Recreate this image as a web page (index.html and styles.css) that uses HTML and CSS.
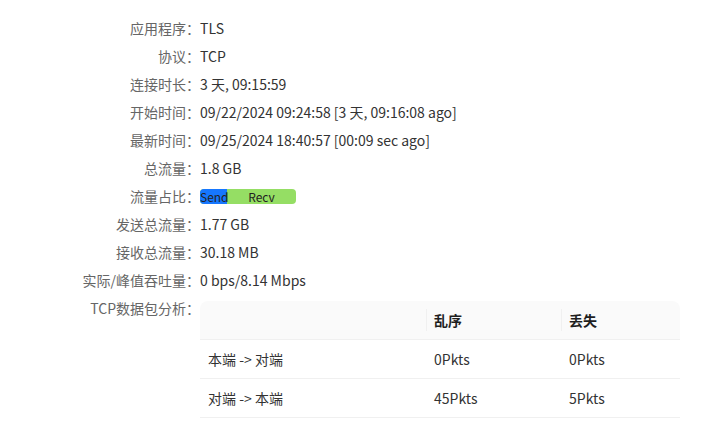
FILE: index.html
```html
<!DOCTYPE html>
<html lang="zh">
<head>
<meta charset="utf-8">
<link rel="stylesheet" href="styles.css">
</head>
<body>
<div class="info">
  <div class="row"><div class="label">应用程序：</div><div class="value">TLS</div></div>
  <div class="row"><div class="label">协议：</div><div class="value">TCP</div></div>
  <div class="row"><div class="label">连接时长：</div><div class="value">3 天, 09:15:59</div></div>
  <div class="row"><div class="label">开始时间：</div><div class="value">09/22/2024 09:24:58 [3 天, 09:16:08 ago]</div></div>
  <div class="row"><div class="label">最新时间：</div><div class="value">09/25/2024 18:40:57 [00:09 sec ago]</div></div>
  <div class="row"><div class="label">总流量：</div><div class="value">1.8 GB</div></div>
  <div class="row"><div class="label">流量占比：</div><div class="value"><div class="bar"><span class="send">Send</span><span class="recv">Recv</span></div></div></div>
  <div class="row"><div class="label">发送总流量：</div><div class="value">1.77 GB</div></div>
  <div class="row"><div class="label">接收总流量：</div><div class="value">30.18 MB</div></div>
  <div class="row"><div class="label">实际/峰值吞吐量：</div><div class="value">0 bps/8.14 Mbps</div></div>
  <div class="row"><div class="label">TCP数据包分析：</div>
    <div class="value">
      <table class="tbl">
        <thead>
          <tr><th class="c1"></th><th class="c2">乱序</th><th class="c3">丢失</th></tr>
        </thead>
        <tbody>
          <tr><td>本端 -&gt; 对端</td><td>0Pkts</td><td>0Pkts</td></tr>
          <tr><td>对端 -&gt; 本端</td><td>45Pkts</td><td>5Pkts</td></tr>
        </tbody>
      </table>
    </div>
  </div>
</div>
</body>
</html>
```
FILE: styles.css
```css
html, body {
  margin: 0;
  padding: 0;
  background: #fff;
}
body {
  font-family: "Noto Sans CJK SC", sans-serif;
  font-size: 14px;
  color: #333;
}
.info {
  padding-top: 14px;
  width: 680px;
}
.row {
  display: flex;
  align-items: flex-start;
}
.label {
  width: 200px;
  flex: none;
  text-align: right;
  line-height: 28px;
  height: 28px;
  color: #666;
  white-space: nowrap;
}
.value {
  flex: 1;
  line-height: 28px;
  min-height: 28px;
  white-space: nowrap;
}
.bar {
  display: flex;
  width: 96px;
  height: 15px;
  margin-top: 7px;
  border-radius: 4px;
  overflow: hidden;
  background: #95de64;
  font-size: 12px;
  line-height: 15px;
  color: #222;
}
.send {
  width: 27px;
  background: #1677ff;
  flex: none;
  overflow: visible;
}
.recv {
  flex: 1;
  text-align: center;
}
.tbl {
  margin-top: 7px;
  width: 480px;
  border-collapse: separate;
  border-spacing: 0;
  line-height: 22px;
}
.tbl th, .tbl td {
  padding: 8px 8px;
  text-align: left;
  border-bottom: 1px solid #f0f0f0;
  height: 22px;
}
.tbl th {
  background: #fafafa;
  font-weight: 600;
  color: #1f1f1f;
  position: relative;
}
.tbl th.c1 { width: 210px; border-top-left-radius: 8px; }
.tbl th.c2 { width: 119px; }
.tbl th.c3 { border-top-right-radius: 8px; }
.tbl th.c2::before, .tbl th.c3::before {
  content: "";
  position: absolute;
  left: 0;
  top: 8px;
  height: 22px;
  width: 1px;
  background: #f0f0f0;
}
.tbl td {
  color: #333;
}
```
